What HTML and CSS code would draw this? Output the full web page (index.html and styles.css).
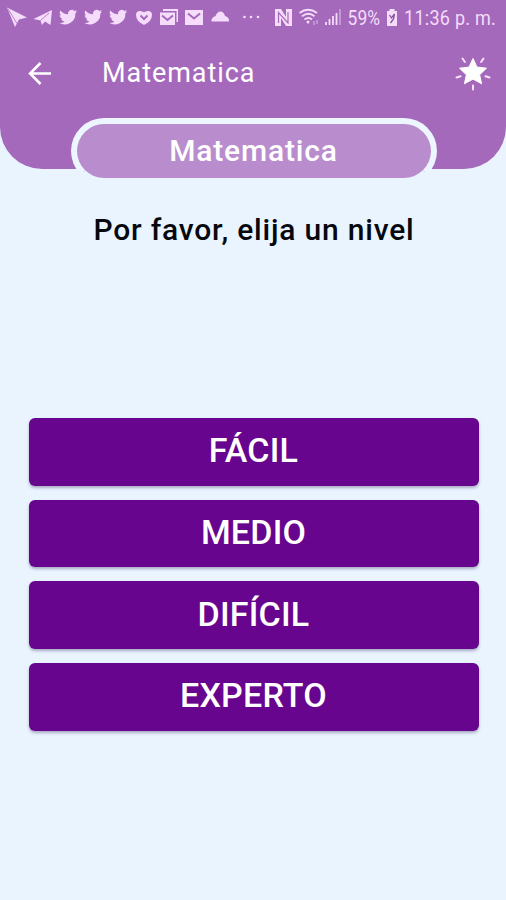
FILE: index.html
```
<!DOCTYPE html>
<html lang="es">
<head>
<meta charset="utf-8">
<meta name="viewport" content="width=device-width, initial-scale=1">
<title>Matematica</title>
<link rel="stylesheet" href="styles.css">
</head>
<body>
<header class="header">
  <div class="status">
    <svg class="notifications" viewBox="0 0 265 36" aria-hidden="true">
      <defs>
        <path id="bird" d="M24 4.6a10 10 0 0 1-2.8.8 5 5 0 0 0 2.2-2.8 10 10 0 0 1-3.2 1.2 5 5 0 0 0-8.4 4.5A14 14 0 0 1 1.7 3.200a5 5 0 0 0 1.500 6.500 5 5 0 0 1-2.200-.6 5 5 0 0 0 4 5 5 5 0 0 1-2.300.1 5 5 0 0 0 4.600 3.400A10 10 0 0 1 0 19.500a14 14 0 0 0 21.500-12.400A10 10 0 0 0 24 4.600z"/>
      </defs>
      <g fill="#f4dcfa">
        <path d="M7 7.500 27 17.500 19 19.500 15 27zM33.500 19 52 10 50.500 25 45 21.500 42 25 40.500 20.500z"/>
        <path d="m8 9 9 14.500M40.500 20.500 49 13" stroke="#a669bc" stroke-width=".8" fill="none"/>
        <use href="#bird" transform="translate(59 8) scale(.76)"/>
        <use href="#bird" transform="translate(84 8) scale(.76)"/>
        <use href="#bird" transform="translate(109 8) scale(.76)"/>
        <path d="M144 25q-8-4-8-10 0-4 4-4 3 0 4 1.500 1-1.500 4-1.500 4 0 4 4 0 6-8 10z"/>
        <path d="M160 12.500h15V25h-15zM163 9h15v13h-1.500V11H163zM185 10h18v15h-18z"/>
        <path d="M211.500 21.500q-.5-4 4-5.500 2-5 5.500-4.500 3 .5 4 4.500 4.500 1 4 5.500z"/>
        <circle cx="244.500" cy="17" r="1.300"/><circle cx="251" cy="17" r="1.300"/><circle cx="258" cy="17" r="1.300"/>
      </g>
      <path d="m140.500 15.500 3.500 3.500 3.500-3.500M162 15.500l5.500 4.500 5.500-4.500M188 13.500l6 5 6-5" fill="none" stroke="#a669bc" stroke-width="2"/>
    </svg>
    <svg class="signal" viewBox="265 0 80 36" aria-hidden="true">
      <path d="M275 9h6l5 8V9h6v17h-6l-5-8v8h-6z" fill="#f4dcfa"/>
      <path d="M278.500 23V12.500L288 23V12" fill="none" stroke="#a669bc" stroke-width="1.200"/>
      <g fill="none" stroke="#f4dcfa" stroke-width="1.800">
        <path d="M299.500 13q8.500-6.500 17.500 0M302 16.300q6.500-5 12.500 0M304.500 19.500q4-3 7.500 0"/>
        <path d="M314 21v4m3-5v4" stroke-width="1.200" opacity=".6"/>
        <path d="M326 25v-3M329.500 25v-6M333 25v-9M336.500 25V13"/>
        <path d="M340 25V9" opacity=".45"/>
      </g>
      <circle cx="308" cy="22" r="1.500" fill="#f4dcfa"/>
    </svg>
    <span class="percent">59%</span>
    <svg class="battery" viewBox="0 0 12 18" aria-hidden="true">
      <path d="M3.500 0h5v2H11v15H1V2h2.500z" fill="#f4dcfa"/>
      <path d="M3.500 6 5.500 9l3-4-1 5-3 4" stroke="#895099" fill="none" stroke-width="1.300"/>
    </svg>
    <span class="clock">11:36 p. m.</span>
  </div>
  <div class="appbar">
    <svg class="back" viewBox="0 0 24 24" aria-label="Atrás"><path d="M12.500 2 2 12.500l10.500 10.500M2 12.500h21" fill="none" stroke="#fff" stroke-width="2.500"/></svg>
    <h1 class="title">Matematica</h1>
    <svg class="star" viewBox="0 0 36 36" aria-hidden="true">
      <path d="m18 3.500 4 8.600 9.500 1.100-6.900 6.600 2 9-8.600-4.700-8.600 4.700 2-9-6.900-6.600L14 12.100z" fill="#fff" stroke="#fff" stroke-width="1" stroke-linejoin="round"/>
      <path d="m7.500 3.500 2.400 3.500M28.500 3.500l-2.400 3.500M1.500 22.500l4-1.300M34.500 22.500l-4-1.300M18 30.500v4" stroke="#fae2ff" stroke-width="2" stroke-linecap="round"/>
    </svg>
  </div>
</header>
<main class="content">
  <div class="badge"><span class="badge-text">Matematica</span></div>
  <p class="prompt">Por favor, elija un nivel</p>
  <div class="levels">
    <button class="level"><span class="easy">FÁCIL</span></button>
    <button class="level"><span class="medium">MEDIO</span></button>
    <button class="level"><span class="hard">DIFÍCIL</span></button>
    <button class="level"><span class="expert">EXPERTO</span></button>
  </div>
</main>
</body>
</html>
```
FILE: styles.css
```
* { box-sizing: border-box; }
body {
  margin: 0;
  height: 900px;
  overflow: hidden;
  background: #e9f4ff;
  font-family: Roboto, sans-serif;
  white-space: nowrap;
}
.header {
  height: 169px;
  background: #a569bc;
  border-radius: 0 0 42px 42px;
}
.status {
  display: flex;
  align-items: center;
  height: 36px;
  color: #f4dcfa;
  font-size: 20px;
}
.notifications { flex: none; width: 265px; height: 36px; }
.signal { flex: none; width: 80px; height: 36px; }
.percent { width: 41px; padding-left: 3px; transform: scaleX(.87); transform-origin: left; }
.battery { flex: none; width: 12px; height: 18px; }
.clock { margin-left: 6px; letter-spacing: .3px; transform: scaleX(.9); transform-origin: left; }
.appbar { display: flex; align-items: center; height: 74px; padding: 0 15px 0 28px; }
.back { width: 24px; height: 24px; }
.title {
  margin: 0 auto 0 50px;
  color: #fff;
  font-size: 27px;
  font-weight: 400;
  letter-spacing: .95px;
}
.star { width: 36px; height: 36px; }
.content { display: flex; flex-direction: column; align-items: center; }
.badge {
  display: flex;
  align-items: center;
  justify-content: center;
  width: 366px;
  height: 66px;
  margin: -51px 0 0 1px;
  padding-bottom: 2px;
  border: 6px solid #edf5ff;
  border-bottom-color: #e9f4ff;
  border-radius: 33px;
  background: #b98dcd;
  color: #fff;
  font-size: 30px;
  font-weight: 500;
}
.badge-text { letter-spacing: .85px; }
.prompt {
  margin: 26px 0 0 2px;
  color: #07080d;
  font-size: 30px;
  font-weight: 500;
  line-height: 40px;
  letter-spacing: .8px;
}
.levels { display: grid; gap: 14px; width: 450px; margin: 168px 0 0 1px; }
.level {
  height: 67.7px;
  padding: 0 0 3px;
  border: 0;
  border-radius: 6px;
  background: #67058e;
  box-shadow: 0 2px 3px #817c9c99;
  color: #fff;
  font: 500 34px/1 Roboto, sans-serif;
  letter-spacing: .2px;
}
```
